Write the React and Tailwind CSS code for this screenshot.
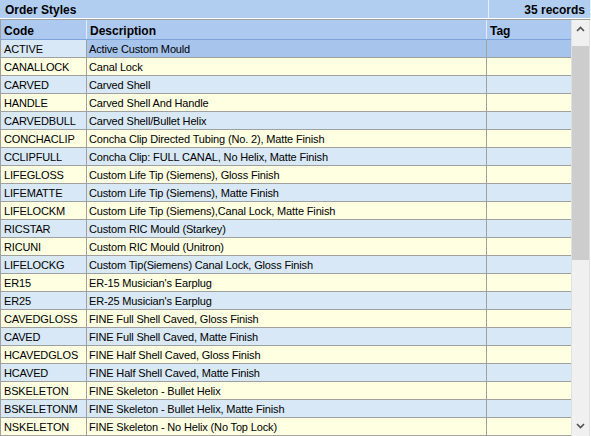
import React from "react";

const rows = [
  ["ACTIVE", "Active Custom Mould"],
  ["CANALLOCK", "Canal Lock"],
  ["CARVED", "Carved Shell"],
  ["HANDLE", "Carved Shell And Handle"],
  ["CARVEDBULL", "Carved Shell/Bullet Helix"],
  ["CONCHACLIP", "Concha Clip Directed Tubing (No. 2), Matte Finish"],
  ["CCLIPFULL", "Concha Clip: FULL CANAL, No Helix, Matte Finish"],
  ["LIFEGLOSS", "Custom Life Tip (Siemens), Gloss Finish"],
  ["LIFEMATTE", "Custom Life Tip (Siemens), Matte Finish"],
  ["LIFELOCKM", "Custom Life Tip (Siemens),Canal Lock, Matte Finish"],
  ["RICSTAR", "Custom RIC Mould (Starkey)"],
  ["RICUNI", "Custom RIC Mould (Unitron)"],
  ["LIFELOCKG", "Custom Tip(Siemens) Canal Lock, Gloss Finish"],
  ["ER15", "ER-15 Musician's Earplug"],
  ["ER25", "ER-25 Musician's Earplug"],
  ["CAVEDGLOSS", "FINE Full Shell Caved, Gloss Finish"],
  ["CAVED", "FINE Full Shell Caved, Matte Finish"],
  ["HCAVEDGLOS", "FINE Half Shell Caved, Gloss Finish"],
  ["HCAVED", "FINE Half Shell Caved, Matte Finish"],
  ["BSKELETON", "FINE Skeleton - Bullet Helix"],
  ["BSKELETONM", "FINE Skeleton - Bullet Helix, Matte Finish"],
  ["NSKELETON", "FINE Skeleton - No Helix (No Top Lock)"],
];

const Row = ({ code, desc, index }) => {
  const selected = index === 0;
  const bg = selected ? "bg-[#a6c4ec]" : index % 2 === 1 ? "bg-[#ffffe1]" : "bg-[#d8e8f7]";
  return (
    <div className={`flex h-[18px] shrink-0 border-b border-[#a0a0a0] ${bg}`}>
      <div
        className={`w-[86px] shrink-0 border-r border-[#a0a0a0] pl-[3px] pt-[1px] leading-[17px] ${
          selected ? "bg-[#d8e8f7]" : ""
        }`}
      >
        {code}
      </div>
      <div className="w-[400px] shrink-0 border-r border-[#a0a0a0] pl-[2px] pt-[1px] leading-[17px] whitespace-nowrap overflow-hidden">
        {desc}
      </div>
      <div className="flex-1" />
    </div>
  );
};

const App = () => {
  return (
    <div className="w-[591px] h-[436px] overflow-hidden bg-white flex flex-col text-[11px] tracking-[-0.15px] text-black font-['Liberation_Sans',sans-serif]">
      <div className="h-[19px] shrink-0 flex bg-[#b1cdf0] border-b border-white font-bold text-[12px] tracking-normal">
        <div className="w-[489px] pl-[5px] pt-[3px] leading-[15px] border-r border-[#e8f0fb]">Order Styles</div>
        <div className="flex-1 text-right pr-[5px] pt-[3px] leading-[15px] border-r border-[#e8f0fb]">35 records</div>
      </div>
      <div className="flex-1 flex min-h-0 border-l border-t border-[#a0a0a0] mr-[1px]">
        <div className="flex-1 flex flex-col min-w-0">
          <div className="h-[20px] shrink-0 flex bg-[#adc9ef] border-b border-[#7ea3d8] font-bold text-[12px] tracking-normal">
            <div className="w-[86px] pl-[3px] pt-[3px] leading-[16px] border-r border-[#e4eefa]">Code</div>
            <div className="w-[400px] pl-[3px] pt-[3px] leading-[16px] border-r border-[#e4eefa]">Description</div>
            <div className="flex-1 pl-[3px] pt-[3px] leading-[16px]">Tag</div>
          </div>
          <div className="flex flex-col">
            {rows.map(([code, desc], i) => (
              <Row key={code} code={code} desc={desc} index={i} />
            ))}
          </div>
        </div>
        <div className="w-[19px] shrink-0 bg-[#f0f0f0] border-l border-[#e0e0e0] border-r border-[#a0a0a0] flex flex-col items-center">
          <div className="h-[17px] w-full flex items-center justify-center">
            <svg width="9" height="6" viewBox="0 0 9 6">
              <path d="M1 5 L4.5 1.5 L8 5" fill="none" stroke="#505050" strokeWidth="1.6" />
            </svg>
          </div>
          <div className="mt-[9px] w-[17px] h-[214px] bg-[#cdcdcd]" />
          <div className="flex-1" />
          <div className="h-[20px] w-full flex items-center justify-center">
            <svg width="9" height="6" viewBox="0 0 9 6">
              <path d="M1 1 L4.5 4.5 L8 1" fill="none" stroke="#505050" strokeWidth="1.6" />
            </svg>
          </div>
        </div>
      </div>
    </div>
  );
};

export default App;
